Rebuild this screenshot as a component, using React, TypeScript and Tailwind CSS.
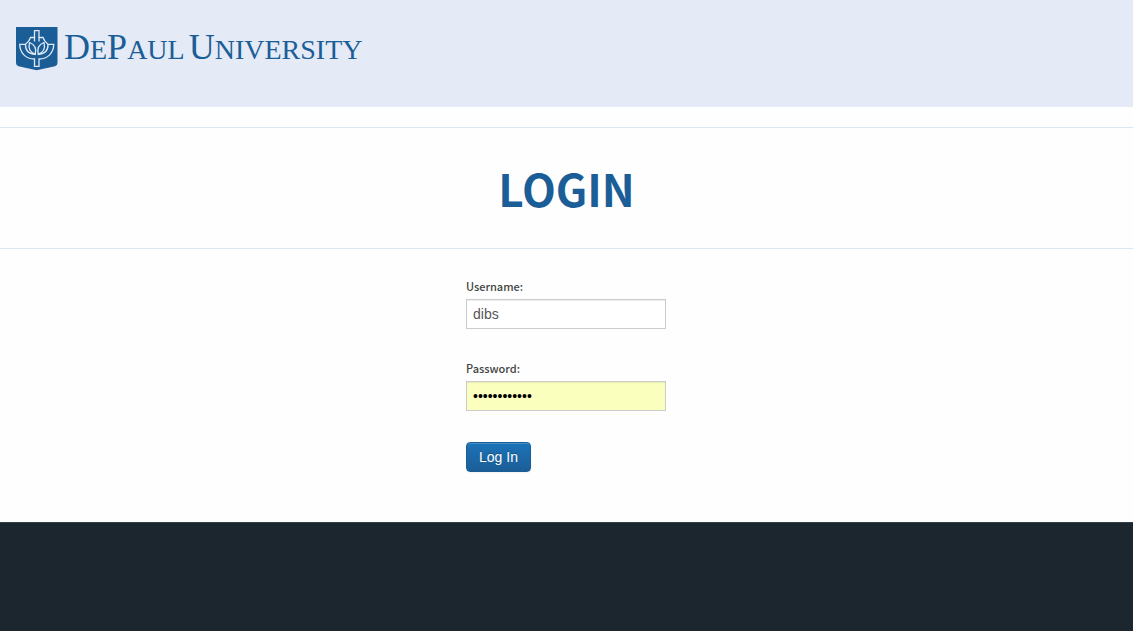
import { useState } from "react";

const Shield = () => (
  <svg viewBox="0 0 42 44" className="h-11 w-[42px] shrink-0" aria-hidden="true">
    <path d="M0 0H41.5V36Q41.5 38.5 39 39.2L20.7 43.2L2.5 39.2Q0 38.5 0 36Z" fill="#1b5e97" />
    <g fill="none" stroke="#dfe9f5" strokeWidth="1.3">
      <path d="M18.5 14.5V10.5H14.5Q13.5 14 9.5 17.3H3.7C4 26 9.5 31.8 18.5 32V39.3H23V32C32 31.8 37.5 26 37.8 17.3H32Q28 14 27 10.5H23V14.5" />
      <path d="M18.5 10.5V3.7H23V10.5" />
      <path d="M13.5 15.5C19 17.5 20.5 22 19.3 27.3C14.5 25.5 12 21.5 13.5 15.5Z" />
      <path d="M28 15.5C22.5 17.5 21 22 22.2 27.3C27 25.5 29.5 21.5 28 15.5Z" />
      <path d="M9.5 17.3C9.3 23 12.5 27 19.3 27.3M32 17.3C32.2 23 29 27 22.2 27.3" />
    </g>
  </svg>
);

const App = () => {
  const [username, setUsername] = useState<string>("dibs");
  const [password, setPassword] = useState<string>("dibsreserves");

  return (
    <div className="min-h-screen flex flex-col bg-[#1c262f] font-['Noto_Sans_CJK_JP',sans-serif]">
      <header className="bg-[#e4eaf6] px-4 pt-[27px] pb-9">
        <a
          href="#"
          aria-label="DePaul University"
          className="flex w-fit items-start gap-1.5 text-[#1b5e97] font-['Liberation_Serif',serif]"
        >
          <Shield />
          <span className="text-[28px] leading-10 whitespace-nowrap">
            <span className="text-[36px]">D</span>E
            <span className="text-[36px]">P</span>AUL
            <span className="ml-1 text-[36px]">U</span>NIVERSITY
          </span>
        </a>
      </header>

      <main className="bg-[#fefefe]">
        <div className="pt-5">
          <h1 className="border-y border-[#dce7f0] py-7 text-center text-[44px] leading-16 font-bold text-[#1b5e97]">
            LOGIN
          </h1>
        </div>

        <form
          className="mx-auto w-[201px] pt-7 pb-[50px]"
          onSubmit={(e) => e.preventDefault()}
        >
          <div className="mb-[30px]">
            <label
              htmlFor="username"
              className="mb-1 block text-[11px] leading-[18px] font-medium text-[#444]"
            >
              Username:
            </label>
            <input
              id="username"
              type="text"
              value={username}
              onChange={(e) => setUsername(e.target.value)}
              className="block h-[30px] w-50 border border-[#ccc] bg-white px-1.5 text-sm text-[#555] shadow-[inset_0_1px_1px_rgba(0,0,0,0.075)] font-['Liberation_Sans',sans-serif]"
            />
          </div>
          <div className="mb-[31px]">
            <label
              htmlFor="password"
              className="mb-1 block text-[11px] leading-[18px] font-medium text-[#444]"
            >
              Password:
            </label>
            <input
              id="password"
              type="password"
              value={password}
              onChange={(e) => setPassword(e.target.value)}
              className="block h-[30px] w-50 border border-[#ccc] bg-[#faffbd] px-1.5 text-sm text-black shadow-[inset_0_1px_1px_rgba(0,0,0,0.075)] font-['Liberation_Sans',sans-serif]"
            />
          </div>
          <button
            type="submit"
            className="block h-[30px] rounded-sm border border-[#1b5e97] bg-linear-to-b from-[#1c73b8] to-[#1b5e97] px-3 text-sm text-white shadow-[inset_0_1px_0_rgba(255,255,255,0.2),0_1px_2px_rgba(0,0,0,0.05)] text-shadow-[0_-1px_0_rgba(0,0,0,0.25)] font-['Liberation_Sans',sans-serif]"
          >
            Log In
          </button>
        </form>
      </main>

      <footer className="grow border-t border-[#333f45] bg-[#1c262f]" />
    </div>
  );
};

export default App;
